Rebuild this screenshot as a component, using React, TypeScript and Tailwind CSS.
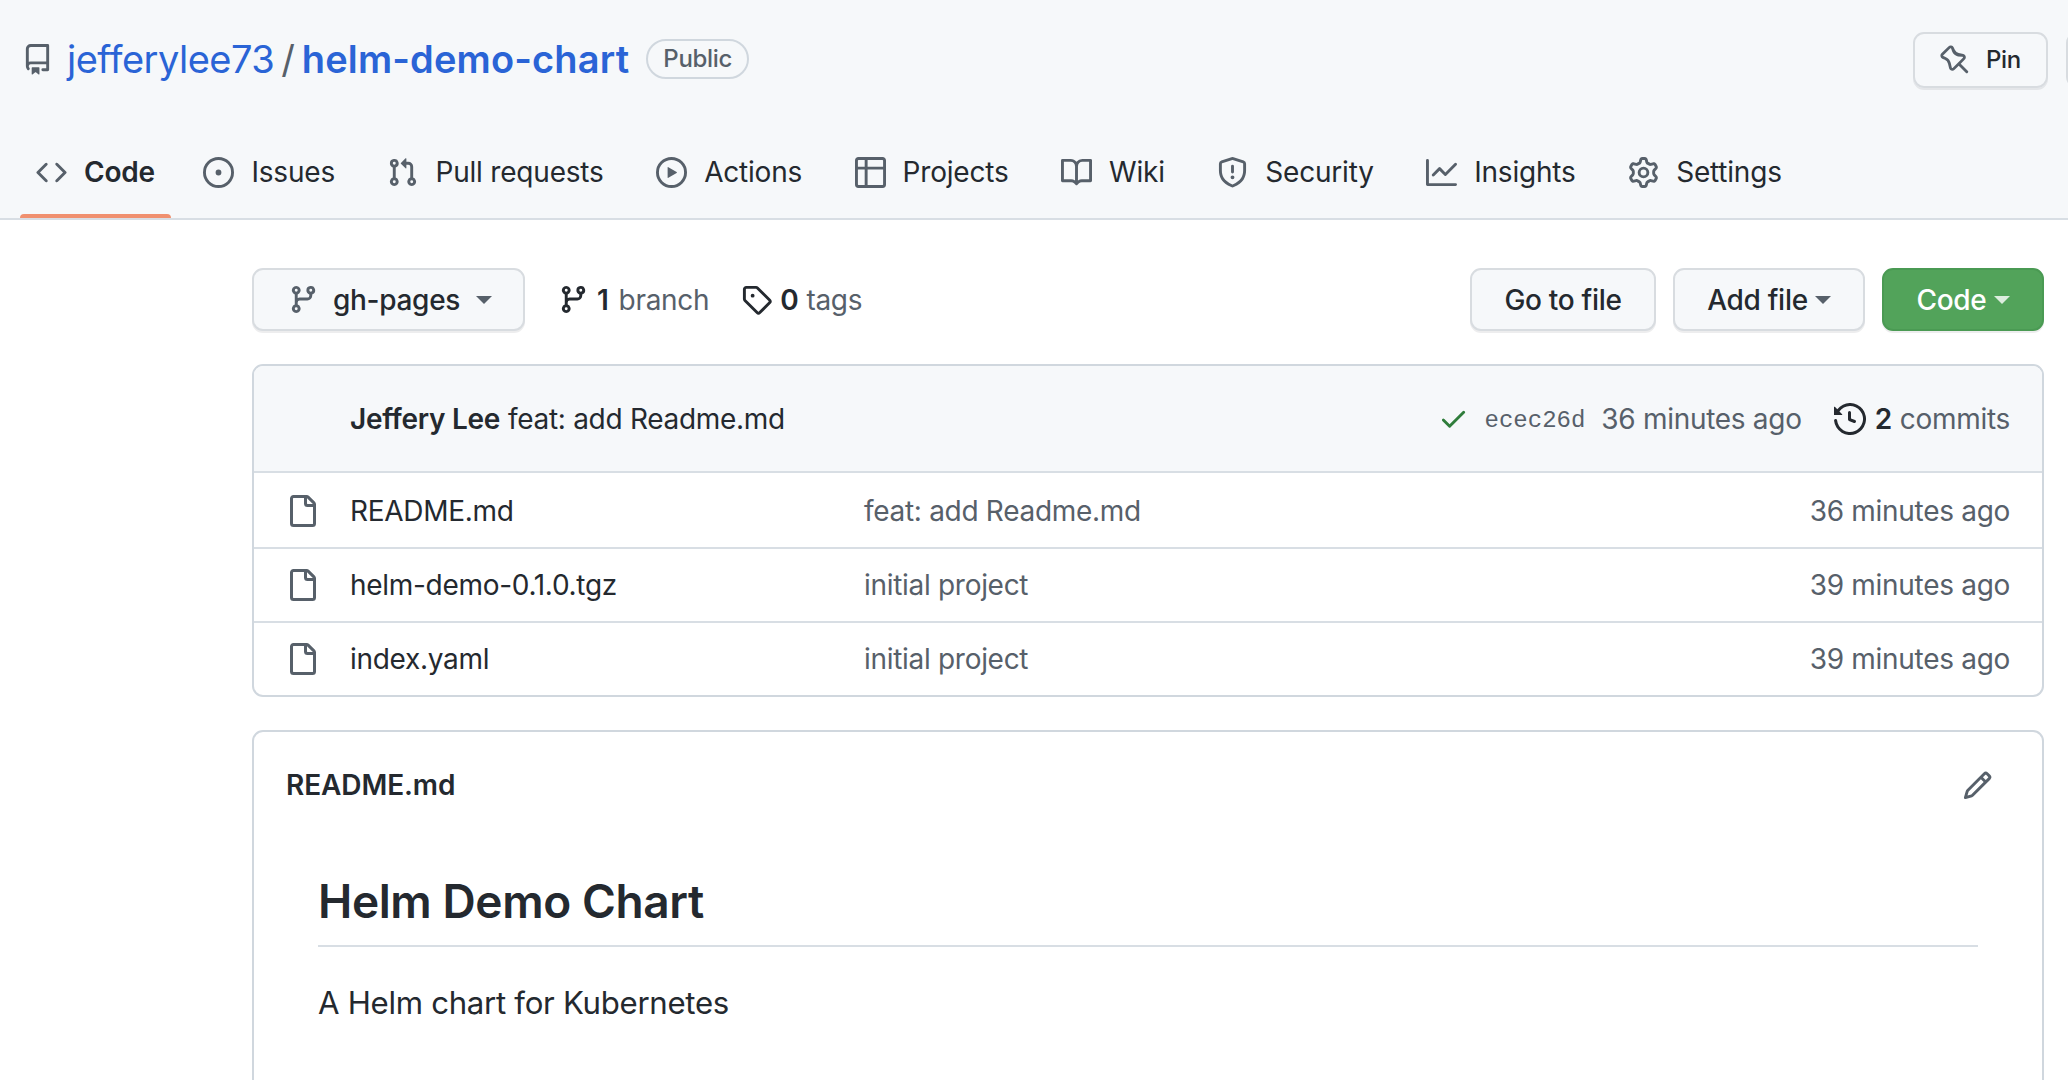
import React from 'react';

// 16px octicons, the react-icons set only ships the thinner 24px ones for most of these
const paths: Record<string, string> = {
    repo: 'M2 2.5A2.5 2.5 0 0 1 4.5 0h8.75a.75.75 0 0 1 .75.75v12.5a.75.75 0 0 1-.75.75h-2.5a.75.75 0 0 1 0-1.5h1.75v-2h-8a1 1 0 0 0-.714 1.7.75.75 0 1 1-1.072 1.05A2.495 2.495 0 0 1 2 11.5Zm10.5-1h-8a1 1 0 0 0-1 1v6.708A2.486 2.486 0 0 1 4.5 9h8ZM5 12.25a.25.25 0 0 1 .25-.25h3.5a.25.25 0 0 1 .25.25v3.25a.25.25 0 0 1-.4.2l-1.45-1.087a.249.249 0 0 0-.3 0L5.4 15.7a.25.25 0 0 1-.4-.2Z',
    code: 'm11.28 3.22 4.25 4.25a.75.75 0 0 1 0 1.06l-4.25 4.25a.749.749 0 0 1-1.275-.326.749.749 0 0 1 .215-.734L13.94 8l-3.72-3.72a.749.749 0 0 1 .326-1.275.749.749 0 0 1 .734.215Zm-6.56 0a.751.751 0 0 1 1.042.018.751.751 0 0 1 .018 1.042L2.06 8l3.72 3.72a.749.749 0 0 1-.326 1.275.749.749 0 0 1-.734-.215L.47 8.53a.75.75 0 0 1 0-1.06Z',
    issue: 'M8 9.5a1.5 1.5 0 1 0 0-3 1.5 1.5 0 0 0 0 3ZM8 0a8 8 0 1 1 0 16A8 8 0 0 1 8 0ZM1.5 8a6.5 6.5 0 1 0 13 0 6.5 6.5 0 0 0-13 0Z',
    pull: 'M1.5 3.25a2.25 2.25 0 1 1 3 2.122v5.256a2.251 2.251 0 1 1-1.5 0V5.372A2.25 2.25 0 0 1 1.5 3.25Zm5.677-.177L9.573.677A.25.25 0 0 1 10 .854V2.5h1A2.5 2.5 0 0 1 13.5 5v5.628a2.251 2.251 0 1 1-1.5 0V5a1 1 0 0 0-1-1h-1v1.646a.25.25 0 0 1-.427.177L7.177 3.427a.25.25 0 0 1 0-.354ZM3.75 2.5a.75.75 0 1 0 0 1.5.75.75 0 0 0 0-1.5Zm0 9.5a.75.75 0 1 0 0 1.5.75.75 0 0 0 0-1.5Zm8.25.75a.75.75 0 1 0 1.5 0 .75.75 0 0 0-1.5 0Z',
    play: 'M8 0a8 8 0 1 1 0 16A8 8 0 0 1 8 0ZM1.5 8a6.5 6.5 0 1 0 13 0 6.5 6.5 0 0 0-13 0Zm4.879-2.773 4.264 2.559a.25.25 0 0 1 0 .428l-4.264 2.559A.25.25 0 0 1 6 10.559V5.442a.25.25 0 0 1 .379-.215Z',
    table: 'M0 1.75C0 .784.784 0 1.75 0h12.5C15.216 0 16 .784 16 1.75v12.5A1.75 1.75 0 0 1 14.25 16H1.75A1.75 1.75 0 0 1 0 14.25ZM6.5 6.5v8h7.75a.25.25 0 0 0 .25-.25V6.5Zm8-1.5V1.75a.25.25 0 0 0-.25-.25H6.5V5Zm-13 1.5v7.75c0 .138.112.25.25.25H5v-8ZM5 5V1.5H1.75a.25.25 0 0 0-.25.25V5Z',
    book: 'M0 1.75A.75.75 0 0 1 .75 1h4.253c1.227 0 2.317.59 3 1.501A3.743 3.743 0 0 1 11.006 1h4.245a.75.75 0 0 1 .75.75v10.5a.75.75 0 0 1-.75.75h-4.507a2.25 2.25 0 0 0-1.591.659l-.622.621a.75.75 0 0 1-1.06 0l-.622-.621A2.25 2.25 0 0 0 5.258 13H.75a.75.75 0 0 1-.75-.75Zm7.251 10.324.004-5.073-.002-2.253A2.25 2.25 0 0 0 5.003 2.5H1.5v9h3.757a3.75 3.75 0 0 1 1.994.574ZM8.755 4.75l-.004 7.322a3.752 3.752 0 0 1 1.992-.572H14.5v-9h-3.495a2.25 2.25 0 0 0-2.25 2.25Z',
    shield: 'M7.467.133a1.748 1.748 0 0 1 1.066 0l5.25 1.68A1.75 1.75 0 0 1 15 3.48V7c0 1.566-.32 3.182-1.303 4.682-.983 1.498-2.585 2.813-5.032 3.855a1.697 1.697 0 0 1-1.33 0c-2.447-1.042-4.049-2.357-5.032-3.855C1.32 10.182 1 8.566 1 7V3.48a1.75 1.75 0 0 1 1.217-1.667Zm.61 1.429a.25.25 0 0 0-.153 0l-5.25 1.68a.25.25 0 0 0-.174.238V7c0 1.358.275 2.666 1.057 3.86.784 1.194 2.121 2.34 4.366 3.297a.196.196 0 0 0 .154 0c2.245-.956 3.582-2.104 4.366-3.298C13.225 9.666 13.5 8.36 13.5 7V3.48a.251.251 0 0 0-.174-.237l-5.25-1.68ZM8.75 4.75v3a.75.75 0 0 1-1.5 0v-3a.75.75 0 0 1 1.5 0ZM9 10.5a1 1 0 1 1-2 0 1 1 0 0 1 2 0Z',
    graph: 'M1.5 1.75V13.5h13.75a.75.75 0 0 1 0 1.5H.75a.75.75 0 0 1-.75-.75V1.75a.75.75 0 0 1 1.5 0Zm14.28 2.53-5.25 5.25a.75.75 0 0 1-1.06 0L7 7.06 4.28 9.78a.751.751 0 0 1-1.042-.018.751.751 0 0 1-.018-1.042l3.25-3.25a.75.75 0 0 1 1.06 0L10 7.94l4.72-4.72a.751.751 0 0 1 1.042.018.751.751 0 0 1 .018 1.042Z',
    gear: 'M8 0a8.2 8.2 0 0 1 .701.031C9.444.095 9.99.645 10.16 1.29l.288 1.107c.018.066.079.158.212.224.231.114.454.243.668.386.123.082.233.09.299.071l1.103-.303c.644-.176 1.392.021 1.82.63.27.385.506.792.704 1.218.315.675.111 1.422-.364 1.891l-.814.806c-.049.048-.098.147-.088.294.016.257.016.515 0 .772-.01.147.038.246.088.294l.814.806c.475.469.679 1.216.364 1.891a7.977 7.977 0 0 1-.704 1.217c-.428.61-1.176.807-1.82.63l-1.102-.302c-.067-.019-.177-.011-.3.071a5.909 5.909 0 0 1-.668.386c-.133.066-.194.158-.211.224l-.29 1.106c-.168.646-.715 1.196-1.458 1.26a8.006 8.006 0 0 1-1.402 0c-.743-.064-1.289-.614-1.458-1.26l-.289-1.106c-.018-.066-.079-.158-.212-.224a5.738 5.738 0 0 1-.668-.386c-.123-.082-.233-.09-.299-.071l-1.103.303c-.644.176-1.392-.021-1.82-.63a8.12 8.12 0 0 1-.704-1.218c-.315-.675-.111-1.422.363-1.891l.815-.806c.05-.048.098-.147.088-.294a6.214 6.214 0 0 1 0-.772c.01-.147-.038-.246-.088-.294l-.815-.806C.635 6.045.431 5.298.746 4.623a7.92 7.92 0 0 1 .704-1.217c.428-.61 1.176-.807 1.82-.63l1.102.302c.067.019.177.011.3-.071.214-.143.437-.272.668-.386.133-.066.194-.158.211-.224l.29-1.106C6.009.645 6.556.095 7.299.03 7.53.01 7.764 0 8 0Zm-.571 1.525c-.036.003-.108.036-.137.146l-.289 1.105c-.147.561-.549.967-.998 1.189-.173.086-.34.183-.5.29-.417.278-.97.423-1.529.27l-1.103-.303c-.109-.03-.175.016-.195.045-.22.312-.412.644-.573.99-.014.031-.021.11.059.19l.815.806c.411.406.562.957.53 1.456a4.709 4.709 0 0 0 0 .582c.032.499-.119 1.05-.53 1.456l-.815.806c-.081.08-.073.159-.059.19.162.346.353.677.573.989.02.03.085.076.195.046l1.102-.303c.56-.153 1.113-.008 1.53.27.161.107.328.204.501.29.447.222.85.629.997 1.189l.289 1.105c.029.109.101.143.137.146a6.6 6.6 0 0 0 1.142 0c.036-.003.108-.036.137-.146l.289-1.105c.147-.561.549-.967.998-1.189.173-.086.34-.183.5-.29.417-.278.97-.423 1.529-.27l1.103.303c.109.029.175-.016.195-.045.22-.313.411-.644.573-.99.014-.031.021-.11-.059-.19l-.815-.806c-.411-.406-.562-.957-.53-1.456a4.709 4.709 0 0 0 0-.582c-.032-.499.119-1.05.53-1.456l.815-.806c.081-.08.073-.159.059-.19a6.464 6.464 0 0 0-.573-.989c-.02-.03-.085-.076-.195-.046l-1.102.303c-.56.153-1.113.008-1.53-.27a4.44 4.44 0 0 0-.501-.29c-.447-.222-.85-.629-.997-1.189l-.289-1.105c-.029-.11-.101-.143-.137-.146a6.6 6.6 0 0 0-1.142 0ZM11 8a3 3 0 1 1-6 0 3 3 0 0 1 6 0ZM9.5 8a1.5 1.5 0 1 0-3.001.001A1.5 1.5 0 0 0 9.5 8Z',
    pin: 'M4.456.734a1.75 1.75 0 012.826.504l.613 1.327a3.081 3.081 0 002.084 1.707l2.454.584c1.332.317 1.8 1.972.832 2.94L11.06 10l3.72 3.72a.75.75 0 11-1.06 1.06L10 11.06l-2.204 2.205c-.968.968-2.623.5-2.94-.832l-.584-2.454a3.081 3.081 0 00-1.707-2.084l-1.327-.613a1.75 1.75 0 01-.504-2.826L4.456.734zM5.92 1.866a.25.25 0 00-.404-.072L1.794 5.516a.25.25 0 00.072.404l1.328.613A4.582 4.582 0 015.73 9.63l.584 2.454a.25.25 0 00.42.12l5.47-5.47a.25.25 0 00-.12-.42L9.63 6.13a4.583 4.583 0 01-3.098-2.537L5.92 1.866z',
    branch: 'M9.5 3.25a2.25 2.25 0 1 1 3 2.122V6A2.5 2.5 0 0 1 10 8.5H6a1 1 0 0 0-1 1v1.128a2.251 2.251 0 1 1-1.5 0V5.372a2.25 2.25 0 1 1 1.5 0v1.836A2.493 2.493 0 0 1 6 7h4a1 1 0 0 0 1-1v-.628A2.25 2.25 0 0 1 9.5 3.25Zm-6 0a.75.75 0 1 0 1.5 0 .75.75 0 0 0-1.5 0Zm8.25-.75a.75.75 0 1 0 0 1.5.75.75 0 0 0 0-1.5ZM4.25 12a.75.75 0 1 0 0 1.5.75.75 0 0 0 0-1.5Z',
    tag: 'M1 7.775V2.75C1 1.784 1.784 1 2.75 1h5.025c.464 0 .91.184 1.238.513l6.25 6.25a1.75 1.75 0 0 1 0 2.474l-5.026 5.026a1.75 1.75 0 0 1-2.474 0l-6.25-6.25A1.752 1.752 0 0 1 1 7.775Zm1.5 0c0 .066.026.13.073.177l6.25 6.25a.25.25 0 0 0 .354 0l5.025-5.025a.25.25 0 0 0 0-.354l-6.25-6.25a.25.25 0 0 0-.177-.073H2.75a.25.25 0 0 0-.25.25ZM6 5a1 1 0 1 1 0 2 1 1 0 0 1 0-2Z',
    check: 'M13.78 4.22a.75.75 0 0 1 0 1.06l-7.25 7.25a.75.75 0 0 1-1.06 0L2.22 9.28a.751.751 0 0 1 .018-1.042.751.751 0 0 1 1.042-.018L6 10.94l6.72-6.72a.75.75 0 0 1 1.06 0Z',
    history: 'm.427 1.927 1.215 1.215a8.002 8.002 0 1 1-1.6 5.685.75.75 0 1 1 1.493-.154 6.5 6.5 0 1 0 1.18-4.458l1.358 1.358A.25.25 0 0 1 3.896 6H.25A.25.25 0 0 1 0 5.75V2.104a.25.25 0 0 1 .427-.177ZM7.75 4a.75.75 0 0 1 .75.75v2.992l2.028.812a.75.75 0 0 1-.557 1.392l-2.5-1A.751.751 0 0 1 7 8.25v-3.5A.75.75 0 0 1 7.75 4Z',
    file: 'M2 1.75C2 .784 2.784 0 3.75 0h6.586c.464 0 .909.184 1.237.513l2.914 2.914c.329.328.513.773.513 1.237v9.586A1.75 1.75 0 0 1 13.25 16h-9.5A1.75 1.75 0 0 1 2 14.25Zm1.75-.25a.25.25 0 0 0-.25.25v12.5c0 .138.112.25.25.25h9.5a.25.25 0 0 0 .25-.25V6h-2.75A1.75 1.75 0 0 1 9 4.25V1.5Zm6.75.062V4.25c0 .138.112.25.25.25h2.688l-.011-.013-2.914-2.914-.013-.011Z',
    pencil: 'M11.013 1.427a1.75 1.75 0 0 1 2.474 0l1.086 1.086a1.75 1.75 0 0 1 0 2.474l-8.61 8.61c-.21.21-.47.364-.756.445l-3.251.93a.75.75 0 0 1-.927-.928l.929-3.25c.081-.286.235-.547.445-.758l8.61-8.61Zm.176 4.823L9.75 4.81l-6.286 6.287a.253.253 0 0 0-.064.108l-.558 1.953 1.953-.558a.253.253 0 0 0 .108-.064Zm1.238-3.763a.25.25 0 0 0-.354 0L10.811 3.75l1.439 1.44 1.263-1.263a.25.25 0 0 0 0-.354Z',
};

function Octicon({ name, className }: { name: string; className: string }) {
    return (
        <svg viewBox="0 0 16 16" fill="currentColor" className={`shrink-0 ${className}`}>
            <path fillRule="evenodd" d={paths[name]} />
        </svg>
    );
}

const tabs = [
    { label: 'Code', icon: 'code', active: true },
    { label: 'Issues', icon: 'issue' },
    { label: 'Pull requests', icon: 'pull' },
    { label: 'Actions', icon: 'play' },
    { label: 'Projects', icon: 'table' },
    { label: 'Wiki', icon: 'book' },
    { label: 'Security', icon: 'shield' },
    { label: 'Insights', icon: 'graph' },
    { label: 'Settings', icon: 'gear' },
];

const files = [
    { name: 'README.md', message: 'feat: add Readme.md', age: '36 minutes ago' },
    { name: 'helm-demo-0.1.0.tgz', message: 'initial project', age: '39 minutes ago' },
    { name: 'index.yaml', message: 'initial project', age: '39 minutes ago' },
];

function Caret({ className }: { className: string }) {
    return <span className={`inline-block w-0 h-0 border-x-[8px] border-x-transparent border-t-[8px] ${className}`}></span>;
}

export default function App() {
    return (
        <div className="h-[1080px] overflow-hidden bg-white text-[#24292f] text-[28px] tracking-[-0.3px] font-['Inter',sans-serif]">
            {/* REPO HEADER */}
            <div className="bg-[#f6f8fa] border-b-2 border-[#d8dee4] h-[220px] flex flex-col">
                <div className="flex items-start h-[126px] pl-[22px] overflow-hidden">
                    <div className="flex items-center h-[118px] shrink-0">
                        <Octicon name="repo" className="w-[31px] h-[31px] text-[#57606a]" />
                        <a className="ml-[14px] text-[38px] text-[#2a64d6] tracking-[-0.5px]">jefferylee73</a>
                        <span className="mx-[7px] text-[38px] text-[#57606a]">/</span>
                        <a className="text-[38px] font-semibold text-[#2a64d6] tracking-[0.15px]">helm-demo-chart</a>
                        <span className="ml-[17px] h-[40px] w-[103px] flex items-center justify-center border-2 border-[#d0d7de] rounded-full text-[24px] font-medium text-[#57606a]">Public</span>
                    </div>
                    <div className="ml-auto flex items-center gap-[18px] mt-[32px] -mr-[38px] shrink-0">
                        <button className="w-[135px] h-[56px] flex items-center justify-center gap-[16px] border-2 border-[#d8dce0] rounded-[11px] text-[24px] font-medium shadow-[0_2px_0_rgba(27,31,36,0.08)]">
                            <Octicon name="pin" className="w-[30px] h-[30px] text-[#57606a]" />
                            Pin
                        </button>
                        <button className="w-[40px] h-[56px] border-2 border-[#d8dce0] rounded-[11px]"></button>
                    </div>
                </div>
                <div className="flex items-start pl-[20px] gap-[20.5px]">
                    {tabs.map((tab) => (
                        <div key={tab.label} className={`relative h-[92px] px-[16px] flex items-center gap-[17px] tracking-[-0.2px] ${tab.active ? 'font-semibold -mr-[4px]' : ''}`}>
                            <Octicon name={tab.icon} className="w-[31px] h-[31px] text-[#57606a]" />
                            <span>{tab.label}</span>
                            {tab.active && <div className="absolute left-0 right-0 bottom-0 h-[4px] rounded-t bg-[#f0906f]"></div>}
                        </div>
                    ))}
                </div>
            </div>

            <div className="pl-[252px] pr-[24px] pt-[48px]">
                {/* TOOLBAR */}
                <div className="flex items-center h-[63px]">
                    <button className="w-[273px] h-[63px] pl-[34px] flex items-center bg-[#f6f8fa] border-2 border-[#d8dce0] rounded-[11px] font-medium shadow-[0_2px_0_rgba(27,31,36,0.08)]">
                        <Octicon name="branch" className="w-[31px] h-[31px] text-[#57606a]" />
                        <span className="ml-[14px]">gh-pages</span>
                        <Caret className="ml-[16px] border-t-[#57606a]" />
                    </button>
                    <div className="ml-[33px] flex items-center text-[#57606a]">
                        <Octicon name="branch" className="w-[31px] h-[31px] text-[#24292f]" />
                        <b className="ml-[8px] font-semibold text-[#24292f]">1</b>
                        <span className="ml-[10px]">branch</span>
                    </div>
                    <div className="ml-[32px] flex items-center text-[#57606a]">
                        <Octicon name="tag" className="w-[31px] h-[31px] text-[#24292f]" />
                        <b className="ml-[8px] font-semibold text-[#24292f]">0</b>
                        <span className="ml-[8px]">tags</span>
                    </div>
                    <div className="ml-auto flex items-center gap-[17px] font-medium">
                        <button className="w-[186px] h-[63px] bg-[#f6f8fa] border-2 border-[#d8dce0] rounded-[11px] shadow-[0_2px_0_rgba(27,31,36,0.08)]">Go to file</button>
                        <button className="w-[192px] h-[63px] flex items-center justify-center gap-[7px] bg-[#f6f8fa] border-2 border-[#d8dce0] rounded-[11px] shadow-[0_2px_0_rgba(27,31,36,0.08)]">
                            Add file
                            <Caret className="border-t-[#57606a]" />
                        </button>
                        <button className="w-[162px] h-[63px] flex items-center justify-center gap-[7px] bg-[#52a35a] border-2 border-[#4a9a53] rounded-[11px] text-white shadow-[0_2px_0_rgba(27,31,36,0.08)]">
                            Code
                            <Caret className="border-t-white/80" />
                        </button>
                    </div>
                </div>

                {/* FILE LIST */}
                <div className="mt-[33px] border-2 border-[#d0d7de] rounded-[11px] overflow-hidden">
                    <div className="h-[107px] pl-[96px] pr-[32px] flex items-center bg-[#f6f8fa] border-b-2 border-[#d8dee4]">
                        <span className="font-semibold">Jeffery Lee</span>
                        <span className="ml-[8px]">feat: add Readme.md</span>
                        <div className="ml-auto flex items-center text-[#57606a]">
                            <Octicon name="check" className="w-[31px] h-[31px] text-[#2f7d3b]" />
                            <span className="ml-[16px] pt-[4px] text-[24px] tracking-normal font-['Liberation_Mono',monospace]">ecec26d</span>
                            <span className="ml-[16px]">36 minutes ago</span>
                            <Octicon name="history" className="ml-[32px] w-[32px] h-[32px] text-[#24292f]" />
                            <b className="ml-[9px] font-semibold text-[#24292f]">2</b>
                            <span className="ml-[8px]">commits</span>
                        </div>
                    </div>
                    {files.map((file, i) => (
                        <div key={file.name} className={`h-[74px] pr-[32px] flex items-center ${i > 0 ? 'border-t-2 border-[#d8dee4]' : 'pt-[1px]'}`}>
                            <Octicon name="file" className="ml-[32px] w-[32px] h-[32px] text-[#57606a]" />
                            <span className="ml-[32px] w-[514px]">{file.name}</span>
                            <span className="text-[#57606a]">{file.message}</span>
                            <span className="ml-auto text-[#57606a]">{file.age}</span>
                        </div>
                    ))}
                </div>

                {/* README */}
                <div className="mt-[33px] h-[400px] border-2 border-[#d0d7de] rounded-[11px] px-[64px]">
                    <div className="h-[106px] -mx-[32px] flex items-center justify-between">
                        <span className="font-semibold tracking-[-0.1px]">README.md</span>
                        <Octicon name="pencil" className="w-[31px] h-[31px] text-[#57606a] mr-[17px]" />
                    </div>
                    <h1 className="pt-[34px] pb-[15px] text-[46px] leading-[58px] font-semibold border-b-2 border-[#d8dee4] tracking-[-0.4px]">Helm Demo Chart</h1>
                    <p className="mt-[38px] leading-[36px] text-[31.2px]">A Helm chart for Kubernetes</p>
                </div>
            </div>
        </div>
    );
}
